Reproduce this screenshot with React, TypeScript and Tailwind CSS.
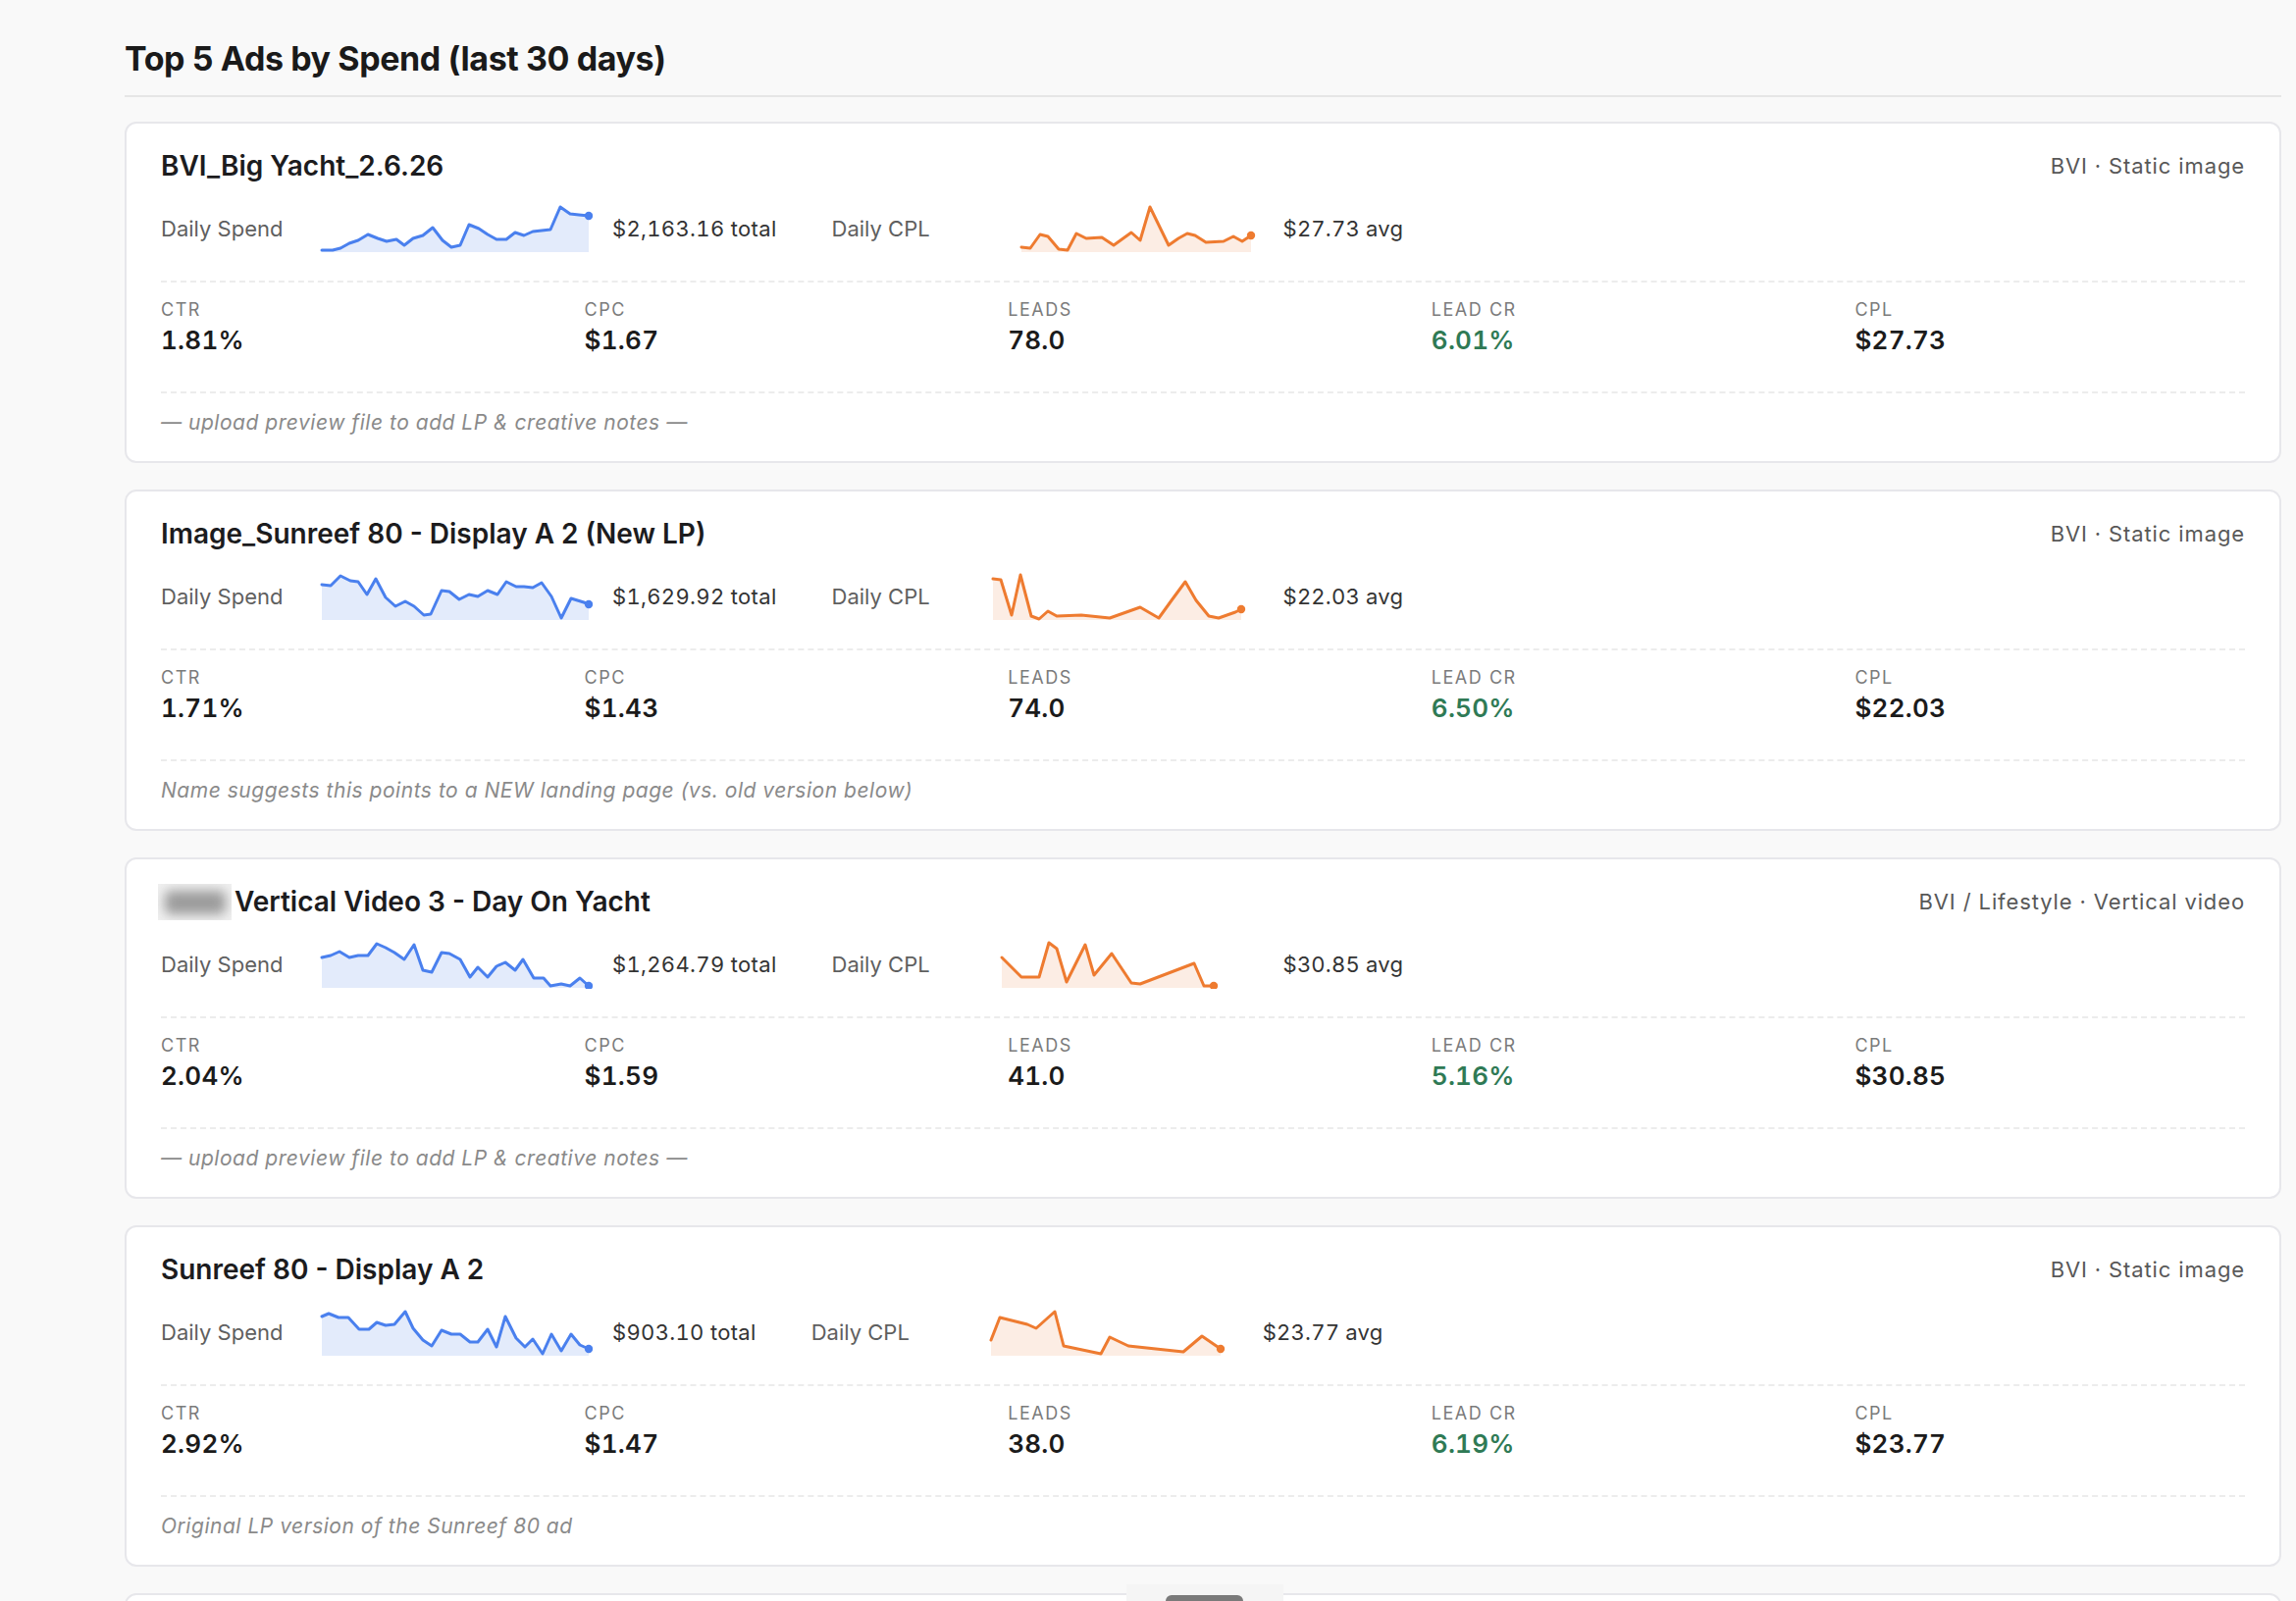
import React from "react";

type Pt = [number, number];

const BLUE = "#4a80ee";
const BLUE_FILL = "#e3ebfb";
const ORANGE = "#ee7b30";
const ORANGE_FILL = "#fcede4";

function Spark({ pts, color, fill }: { pts: Pt[]; color: string; fill: string }) {
  const line = pts.map((p) => `${p[0]},${p[1]}`).join(" ");
  const first = pts[0];
  const last = pts[pts.length - 1];
  const area = `${first[0]},49 ${line} ${last[0]},49`;
  return (
    <svg width={280} height={50} viewBox="0 0 280 50" className="shrink-0 block">
      <polygon points={area} fill={fill} />
      <polyline
        points={line}
        fill="none"
        stroke={color}
        strokeWidth={3}
        strokeLinejoin="round"
        strokeLinecap="round"
      />
      <circle cx={last[0]} cy={last[1]} r={4.2} fill={color} />
    </svg>
  );
}

type Ad = {
  title: string;
  blur?: boolean;
  meta: string;
  spend: Pt[];
  cpl: Pt[];
  total: string;
  avg: string;
  ctr: string;
  cpc: string;
  leads: string;
  leadCr: string;
  cplVal: string;
  note: string;
};

const ads: Ad[] = [
  {
    title: "BVI_Big Yacht_2.6.26",
    meta: "BVI · Static image",
    spend: [
      [4, 47], [15, 47], [23, 45], [32, 40], [41, 37], [51, 31], [61, 35], [70, 38], [80, 36], [88, 42],
      [97, 35], [107, 32], [117, 24], [127, 37], [136, 44], [145, 42], [154, 21], [164, 25], [173, 31],
      [182, 36], [192, 36], [201, 29], [210, 32], [219, 28], [228, 27], [237, 26], [247, 3], [257, 10],
      [266, 11], [276, 12],
    ],
    cpl: [
      [33, 44], [42, 45], [52, 31], [60, 33], [71, 46], [80, 47], [89, 30], [99, 35], [115, 34], [127, 42],
      [145, 29], [154, 37], [164, 3], [183, 42], [193, 35], [202, 30], [210, 32], [221, 39], [239, 38],
      [249, 33], [258, 38], [267, 32],
    ],
    total: "$2,163.16 total",
    avg: "$27.73 avg",
    ctr: "1.81%",
    cpc: "$1.67",
    leads: "78.0",
    leadCr: "6.01%",
    cplVal: "$27.73",
    note: "— upload preview file to add LP & creative notes —",
  },
  {
    title: "Image_Sunreef 80 - Display A 2 (New LP)",
    meta: "BVI · Static image",
    spend: [
      [4, 13], [13, 14], [23, 4], [33, 9], [41, 10], [50, 23], [59, 7], [69, 26], [79, 35], [89, 30],
      [98, 35], [108, 44], [115, 43], [126, 19], [134, 20], [144, 28], [154, 23], [163, 25], [173, 19],
      [183, 23], [192, 10], [202, 15], [210, 15], [219, 16], [228, 11], [238, 25], [248, 47], [258, 27],
      [271, 31], [276, 33],
    ],
    cpl: [
      [4, 7], [12, 8], [23, 44], [32, 3], [43, 45], [51, 48], [60, 40], [69, 45], [94, 44], [123, 47],
      [154, 36], [173, 47], [186, 29], [200, 10], [211, 29], [224, 45], [234, 47], [251, 41], [257, 38],
    ],
    total: "$1,629.92 total",
    avg: "$22.03 avg",
    ctr: "1.71%",
    cpc: "$1.43",
    leads: "74.0",
    leadCr: "6.50%",
    cplVal: "$22.03",
    note: "Name suggests this points to a NEW landing page (vs. old version below)",
  },
  {
    title: "Vertical Video 3 - Day On Yacht",
    blur: true,
    meta: "BVI / Lifestyle · Vertical video",
    spend: [
      [4, 18], [13, 16], [22, 12], [32, 18], [41, 16], [51, 16], [60, 4], [69, 8], [78, 13], [88, 20],
      [98, 5], [107, 31], [116, 33], [126, 13], [134, 14], [145, 20], [155, 38], [163, 28], [173, 38],
      [182, 27], [191, 23], [201, 31], [209, 20], [220, 39], [230, 39], [237, 47], [248, 45], [257, 47],
      [267, 39], [276, 47],
    ],
    cpl: [
      [13, 18], [33, 38], [51, 38], [61, 3], [69, 9], [79, 43], [98, 5], [107, 36], [125, 14], [145, 44],
      [154, 45], [209, 24], [219, 47], [229, 47],
    ],
    total: "$1,264.79 total",
    avg: "$30.85 avg",
    ctr: "2.04%",
    cpc: "$1.59",
    leads: "41.0",
    leadCr: "5.16%",
    cplVal: "$30.85",
    note: "— upload preview file to add LP & creative notes —",
  },
  {
    title: "Sunreef 80 - Display A 2",
    meta: "BVI · Static image",
    spend: [
      [4, 9], [11, 6], [21, 10], [31, 10], [42, 22], [52, 22], [60, 15], [69, 18], [78, 17], [89, 4],
      [97, 21], [107, 33], [116, 39], [126, 23], [136, 27], [145, 27], [155, 35], [163, 35], [173, 22],
      [182, 40], [191, 9], [202, 31], [211, 40], [219, 32], [229, 47], [238, 27], [248, 44], [258, 27],
      [267, 38], [276, 42],
    ],
    cpl: [
      [23, 33], [32, 10], [60, 17], [69, 21], [88, 4], [97, 39], [135, 47], [144, 30], [163, 39],
      [219, 45], [238, 29], [257, 42],
    ],
    total: "$903.10 total",
    avg: "$23.77 avg",
    ctr: "2.92%",
    cpc: "$1.47",
    leads: "38.0",
    leadCr: "6.19%",
    cplVal: "$23.77",
    note: "Original LP version of the Sunreef 80 ad",
  },
];

function Metric({ label, value, green }: { label: string; value: string; green?: boolean }) {
  return (
    <div className="flex flex-col">
      <div className="text-[18px] leading-[22px] tracking-[0.085em] text-[#7b7b7b] uppercase">{label}</div>
      <div
        className={`mt-[4px] text-[26px] leading-[32px] font-semibold tabular-nums tracking-[0.01em] ${green ? "text-[#2f7a55]" : "text-[#1b1b1b]"}`}
      >
        {value}
      </div>
    </div>
  );
}

function Card({ ad }: { ad: Ad }) {
  return (
    <div className="h-[348px] rounded-[12px] border-2 border-[#e7e7eb] bg-white px-[35px] pt-[25px] pb-[24px] flex flex-col">
      <div className="flex items-center justify-between h-[36px]">
        <div className="flex items-center text-[28px] leading-[36px] font-semibold text-[#1c1c1e]">
          {ad.blur && (
            <span className="relative mr-[3px] inline-block h-[37px] w-[75px] -ml-[3px] bg-[#f0f0f0] overflow-hidden">
              <span className="absolute left-[7px] top-[7px] h-[24px] w-[62px] rounded-[6px] bg-[#9c9c9c] blur-[6px]" />
            </span>
          )}
          <span>{ad.title}</span>
        </div>
        <div className="text-[22px] leading-[30px] text-[#585858] tracking-[0.04em]">{ad.meta}</div>
      </div>

      <div className="mt-[21px] flex items-center h-[50px]">
        <div className="flex items-center">
          <div className="w-[140px] text-[22px] leading-[30px] text-[#5f5f5f]">Daily Spend</div>
          <div className="ml-[20px]">
            <Spark pts={ad.spend} color={BLUE} fill={BLUE_FILL} />
          </div>
          <div className="ml-[20px] text-[22px] leading-[30px] text-[#333] tabular-nums tracking-[0.015em]">{ad.total}</div>
        </div>
        <div className="ml-[56px] flex items-center">
          <div className="w-[140px] text-[22px] leading-[30px] text-[#5f5f5f]">Daily CPL</div>
          <div className="ml-[20px]">
            <Spark pts={ad.cpl} color={ORANGE} fill={ORANGE_FILL} />
          </div>
          <div className="ml-[20px] text-[22px] leading-[30px] text-[#333] tabular-nums tracking-[0.01em]">{ad.avg}</div>
        </div>
      </div>

      <div className="mt-[28px] border-t-2 border-dashed border-[#ececec] pt-[17px] pb-[36px] grid grid-cols-5 gap-x-[34px]">
        <Metric label="CTR" value={ad.ctr} />
        <Metric label="CPC" value={ad.cpc} />
        <Metric label="Leads" value={ad.leads} />
        <Metric label="Lead CR" value={ad.leadCr} green />
        <Metric label="CPL" value={ad.cplVal} />
      </div>

      <div className="border-t-2 border-dashed border-[#ececec] pt-[15px]">
        <div className="text-[21px] leading-[30px] italic text-[#8a8a8a] tracking-[0.025em]">{ad.note}</div>
      </div>
    </div>
  );
}

export default function App() {
  return (
    <div
      className="relative h-[1632px] w-[2340px] overflow-hidden bg-[#f9f9f9]"
      style={{ fontFamily: "Inter, 'Noto Sans', 'Liberation Sans', sans-serif" }}
    >
      <div className="pl-[127px] pr-[15px] pt-[38px]">
        <div className="border-b-2 border-[#e6e6e6] pb-[15px]">
          <h1 className="text-[34px] leading-[44px] font-bold text-[#1a1a1a] tracking-[-0.012em]">
            Top 5 Ads by Spend (last 30 days)
          </h1>
        </div>
        <div className="mt-[25px] flex flex-col gap-[27px]">
          {ads.map((ad, i) => (
            <Card key={i} ad={ad} />
          ))}
          <div className="h-[348px] rounded-[12px] border-2 border-[#e7e7eb] bg-white" />
        </div>
      </div>
      <div className="absolute left-[1148px] top-[1615px] h-[17px] w-[160px] bg-[#f5f5f5]" />
      <div className="absolute left-[1188px] top-[1626px] h-[6px] w-[79px] rounded-t-[6px] bg-[#7a7a7a]" />
    </div>
  );
}
